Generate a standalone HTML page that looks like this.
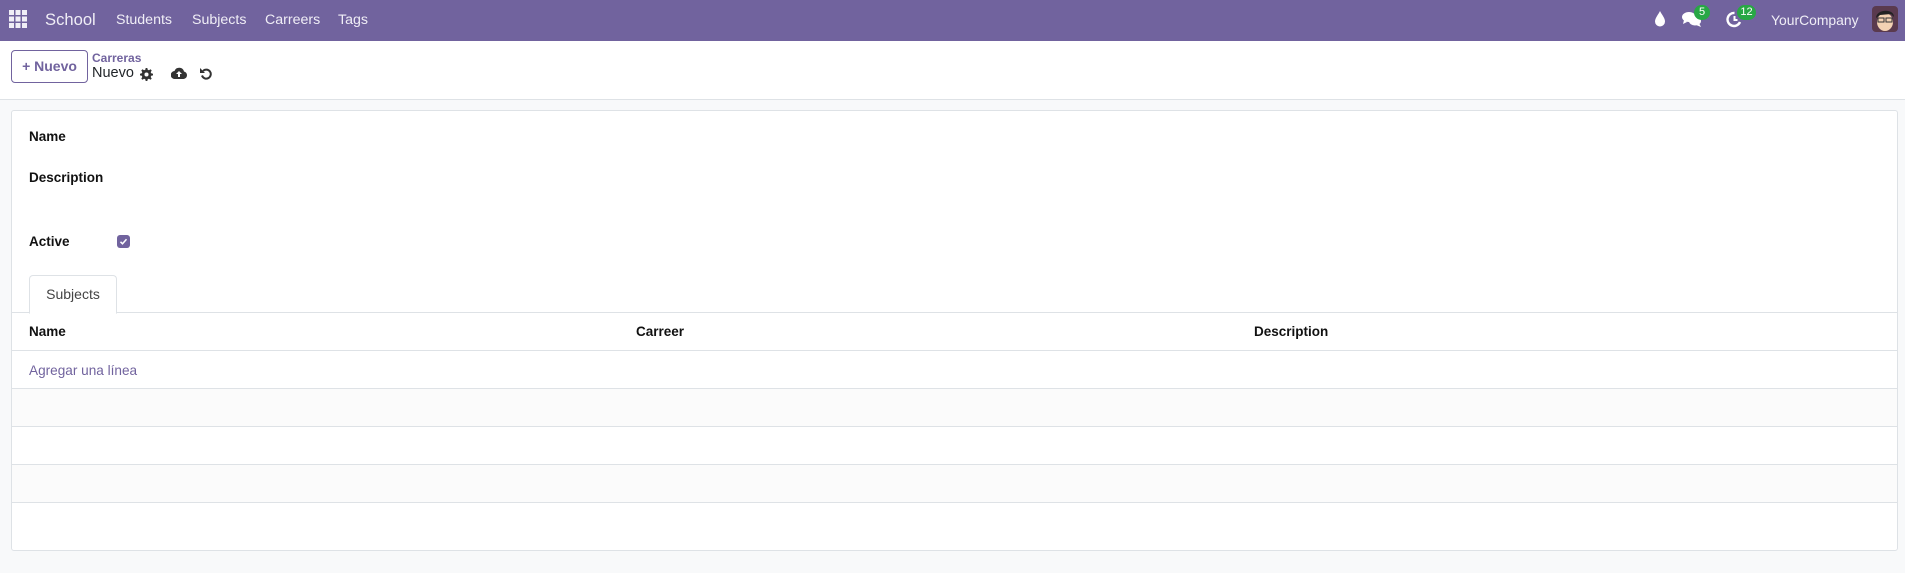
<!DOCTYPE html>
<html><head><meta charset="utf-8">
<style>
*{box-sizing:border-box;margin:0;padding:0}
body{width:1905px;height:573px;overflow:hidden;background:#f8f9fa;font-family:"Liberation Sans",Arial,sans-serif;color:#212529;position:relative}
.nav{position:absolute;left:0;top:0;width:1905px;height:41px;background:#71639e;color:#fff}
.nav span{position:absolute;top:12px;font-size:14.2px;color:#f0eef6}
.cp{position:absolute;left:0;top:41px;width:1905px;height:59px;background:#fff;border-bottom:1px solid #dee2e6}
.btn{position:absolute;left:11px;top:9px;width:77px;height:33px;border:1px solid #71639e;border-radius:4px;color:#71639e;font-weight:bold;font-size:14px;line-height:31px;text-align:center}
.sheet{position:absolute;left:11px;top:110px;width:1887px;height:441px;background:#fff;border:1px solid #dee2e6;border-radius:3px}
.lbl{position:absolute;left:17px;font-weight:bold;font-size:13.5px;color:#111}
.row{position:absolute;left:0;width:1885px;border-bottom:1px solid #dee2e6}
.th{position:absolute;top:11px;font-weight:bold;font-size:13.5px;color:#111}
.badge{position:absolute;background:#28a745;color:#fff;font-size:11px;border-radius:9px;text-align:center;line-height:15px;height:15px}
</style></head><body>
<div class="nav">
 <svg style="position:absolute;left:9px;top:10px" width="18" height="18" viewBox="0 0 18 18" fill="#f0eef6">
  <rect x="0" y="0" width="5" height="5"/><rect x="6.5" y="0" width="5" height="5"/><rect x="13" y="0" width="5" height="5"/>
  <rect x="0" y="6.5" width="5" height="5"/><rect x="6.5" y="6.5" width="5" height="5"/><rect x="13" y="6.5" width="5" height="5"/>
  <rect x="0" y="13" width="5" height="5"/><rect x="6.5" y="13" width="5" height="5"/><rect x="13" y="13" width="5" height="5"/>
 </svg>
 <span style="left:45px;top:10px;font-size:16.6px">School</span>
 <span style="left:116px">Students</span>
 <span style="left:192px">Subjects</span>
 <span style="left:265px">Carreers</span>
 <span style="left:338px">Tags</span>
 <svg style="position:absolute;left:1654px;top:11px" width="12" height="16" viewBox="0 0 12 16"><path d="M6 0C4 4 1 7 1 10.5a5 5 0 0 0 10 0C11 7 8 4 6 0z" fill="#fff"/></svg>
 <svg style="position:absolute;left:1682px;top:11px" width="20" height="17" viewBox="0 0 20 17" fill="#fff"><ellipse cx="7" cy="6" rx="7" ry="5"/><path d="M2 9l-1 4 4-2z"/><ellipse cx="13" cy="10" rx="6" ry="4.5"/><path d="M17 12l2 4-5-2z"/></svg>
 <div class="badge" style="left:1694px;top:5px;width:16px">5</div>
 <svg style="position:absolute;left:1726px;top:11px" width="17" height="17" viewBox="0 0 17 17"><path d="M14 11A6.5 6.5 0 1 1 8.5 2" stroke="#fff" stroke-width="2.4" fill="none"/><path d="M8.5 5v4h3" stroke="#fff" stroke-width="2" fill="none"/></svg>
 <div class="badge" style="left:1737px;top:5px;width:19px">12</div>
 <span style="left:1771px;font-size:13.9px">YourCompany</span>
 <svg style="position:absolute;left:1872px;top:6px" width="26" height="26" viewBox="0 0 26 26"><rect width="26" height="26" rx="4" fill="#5a3a4e"/><ellipse cx="13" cy="16" rx="8" ry="9" fill="#f3d2b3"/><path d="M4 12C4 3 22 2 22 11L19 8 8 9z" fill="#222"/><rect x="6" y="12" width="6" height="4" fill="none" stroke="#333"/><rect x="14" y="12" width="6" height="4" fill="none" stroke="#333"/></svg>
</div>
<div class="cp">
 <div class="btn">+ Nuevo</div>
 <div style="position:absolute;left:92px;top:10px;font-size:12px;font-weight:bold;color:#71639e">Carreras</div>
 <div style="position:absolute;left:92px;top:24px;font-size:14.5px;color:#212529">Nuevo</div>
 <svg style="position:absolute;left:140px;top:27px" width="13" height="13" viewBox="0 0 16 16" fill="#333"><path d="M7 0h2l.5 2.2 1.5.6 2-1.2 1.4 1.4-1.2 2 .6 1.5L16 7v2l-2.2.5-.6 1.5 1.2 2-1.4 1.4-2-1.2-1.5.6L9 16H7l-.5-2.2-1.5-.6-2 1.2-1.4-1.4 1.2-2-.6-1.5L0 9V7l2.2-.5.6-1.5-1.2-2L3 1.6l2 1.2 1.5-.6z"/><circle cx="8" cy="8" r="2.5" fill="#fff"/></svg>
 <svg style="position:absolute;left:171px;top:26px" width="16" height="12" viewBox="0 0 16 12"><path d="M4 12A4 4 0 0 1 3.5 4 5 5 0 0 1 13 4.5 3.8 3.8 0 0 1 12.5 12z" fill="#333"/><path d="M8 4l-3 3h2v3h2V7h2z" fill="#fff"/></svg>
 <svg style="position:absolute;left:200px;top:26px" width="12" height="13" viewBox="0 0 12 13"><path d="M3 4A4.5 4.5 0 1 1 2 8.5" stroke="#333" stroke-width="2" fill="none"/><path d="M0 1v5h5z" fill="#333"/></svg>
</div>
<div class="sheet">
 <div class="lbl" style="top:18px">Name</div>
 <div class="lbl" style="top:59px">Description</div>
 <div class="lbl" style="top:123px">Active</div>
 <div style="position:absolute;left:105px;top:124px;width:13px;height:13px;border-radius:3px;background:#71639e"><svg width="13" height="13" viewBox="0 0 13 13"><path d="M3.5 6.8l2 2 4-4.5" stroke="#fff" stroke-width="1.5" fill="none"/></svg></div>
 <div style="position:absolute;left:17px;top:164px;width:88px;height:39px;border:1px solid #dee2e6;border-bottom:1px solid #fff;border-radius:4px 4px 0 0;background:#fff;z-index:2;font-size:14px;color:#444;text-align:center;line-height:36px">Subjects</div>
 <div class="row" style="top:164px;height:38px"></div>
 <div class="row" style="top:202px;height:38px"><div class="th" style="left:17px">Name</div><div class="th" style="left:624px">Carreer</div><div class="th" style="left:1242px">Description</div></div>
 <div class="row" style="top:240px;height:38px"><div style="position:absolute;left:17px;top:12px;font-size:13.6px;color:#71639e">Agregar una línea</div></div>
 <div class="row" style="top:278px;height:38px;background:#fbfbfb"></div>
 <div class="row" style="top:316px;height:38px"></div>
 <div class="row" style="top:354px;height:38px;background:#fbfbfb"></div>
</div>
</body></html>
